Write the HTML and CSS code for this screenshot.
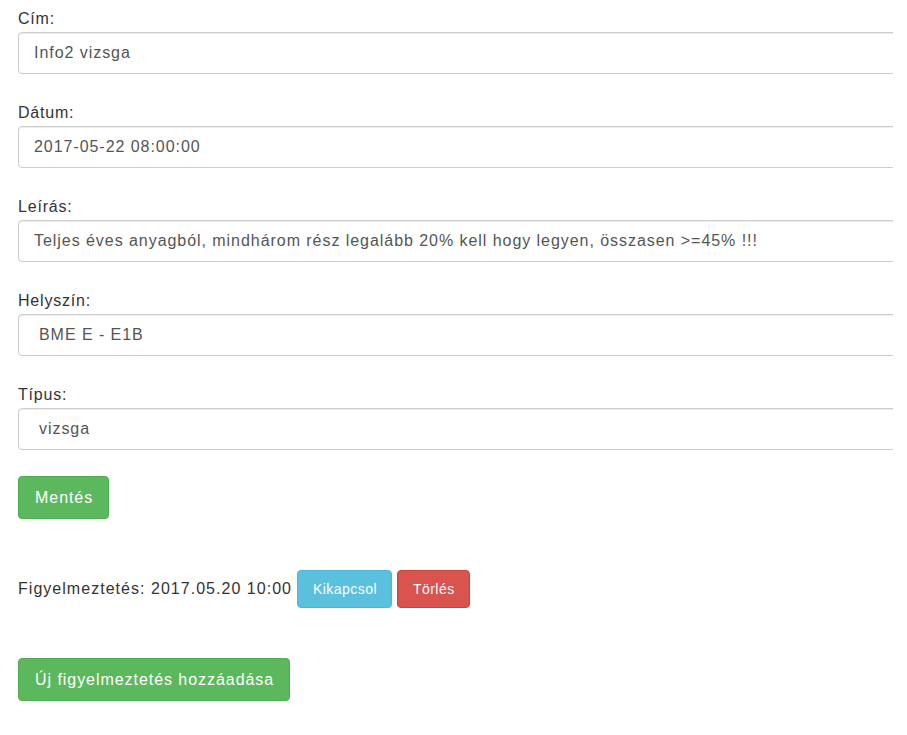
FILE: index.html
```html
<!DOCTYPE html>
<html lang="hu">
<head>
<meta charset="utf-8">
<title>Esemény</title>
<link rel="stylesheet" href="styles.css">
</head>
<body>
<div class="page">
  <form class="form">
    <div class="fields">
      <div class="group">
        <label class="label">Cím:</label>
        <div class="input">Info2 vizsga</div>
      </div>
      <div class="group">
        <label class="label">Dátum:</label>
        <div class="input">2017-05-22 08:00:00</div>
      </div>
      <div class="group">
        <label class="label">Leírás:</label>
        <div class="input">Teljes éves anyagból, mindhárom rész legalább 20% kell hogy legyen, összasen &gt;=45% !!!</div>
      </div>
      <div class="group">
        <label class="label">Helyszín:</label>
        <div class="input indent">BME E - E1B</div>
      </div>
      <div class="group">
        <label class="label">Típus:</label>
        <div class="input indent">vizsga</div>
      </div>
    </div>
    <div class="actions">
      <button type="button" class="btn btn-success">Mentés</button>
    </div>
  </form>
  <div class="alert-row">
    <span class="alert-text">Figyelmeztetés: 2017.05.20 10:00</span>
    <button type="button" class="btn btn-sm btn-info">Kikapcsol</button>
    <button type="button" class="btn btn-sm btn-danger">Törlés</button>
  </div>
  <div class="add-row">
    <button type="button" class="btn btn-success">Új figyelmeztetés hozzáadása</button>
  </div>
</div>
</body>
</html>
```
FILE: styles.css
```css
html, body {
  margin: 0;
  padding: 0;
  background: #fff;
}
body {
  font-family: "Liberation Sans", Arial, sans-serif;
  color: #333;
  font-size: 16px;
}
.page {
  width: 875px;
  padding: 0 0 0 18px;
  overflow: hidden;
}
.form {
  display: flex;
  flex-direction: column;
  padding-top: 9px;
}
.fields {
  display: flex;
  flex-direction: column;
  gap: 29px;
  margin-bottom: 26px;
}
.group {
  display: flex;
  flex-direction: column;
}
.label {
  font-size: 16px;
  line-height: 20px;
  height: 20px;
  margin-bottom: 3px;
  letter-spacing: 0.8px;
}
.input {
  width: 900px;
  height: 42px;
  box-sizing: border-box;
  border: 1px solid #ccc;
  border-radius: 4px;
  box-shadow: inset 0 1px 1px rgba(0,0,0,.075);
  padding: 0 15px;
  display: flex;
  align-items: center;
  color: #555;
  font-size: 16px;
  letter-spacing: 0.95px;
  white-space: nowrap;
}
.input.indent {
  padding-left: 20px;
}
.btn {
  font-family: "Liberation Sans", Arial, sans-serif;
  border: 1px solid transparent;
  border-radius: 4px;
  color: #fff;
  font-size: 16px;
  height: 43px;
  padding: 0 15px 0 16px;
  letter-spacing: 0.95px;
  cursor: pointer;
}
.btn-success {
  background: #5cb85c;
  border-color: #4cae4c;
}
.btn-info {
  background: #5bc0de;
  border-color: #46b8da;
}
.btn-danger {
  background: #d9534f;
  border-color: #d43f3a;
}
.btn-sm {
  font-size: 14px;
  height: 38px;
  padding: 0 14px 0 15px;
  letter-spacing: 0.45px;
}
.alert-row {
  display: flex;
  align-items: center;
  gap: 5px;
  margin-top: 51px;
}
.alert-text {
  font-size: 16px;
  letter-spacing: 1.03px;
}
.add-row {
  margin-top: 50px;
}
```
